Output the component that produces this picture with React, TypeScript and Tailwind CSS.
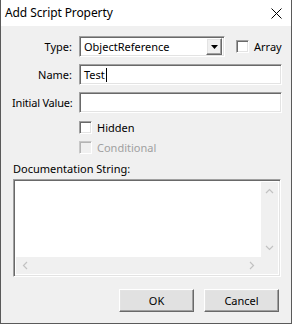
import React from "react";

const sunken =
  "border border-t-[#a0a0a0] border-l-[#a0a0a0] border-r-white border-b-white shadow-[inset_1px_1px_0_#696969,inset_-1px_-1px_0_#e3e3e3]";
const raised =
  "border border-t-white border-l-white border-r-[#696969] border-b-[#696969] shadow-[inset_-1px_-1px_0_#a0a0a0,inset_1px_1px_0_#e3e3e3]";

function CheckBox({ disabled }: { disabled?: boolean }) {
  return (
    <div
      className={`w-[13px] h-[13px] shrink-0 ${
        disabled
          ? "border border-t-[#c8c8c8] border-l-[#c8c8c8] border-r-white border-b-white shadow-[inset_1px_1px_0_#b4b4b4] bg-[#f0f0f0]"
          : `${sunken} bg-white`
      }`}
    />
  );
}

function Chevron({ dir }: { dir: "up" | "down" | "left" | "right" }) {
  const pts = {
    up: "1,5 4.5,1.5 8,5",
    down: "1,2 4.5,5.5 8,2",
    left: "5,1 1.5,4.5 5,8",
    right: "2,1 5.5,4.5 2,8",
  }[dir];
  const w = dir === "up" || dir === "down" ? 9 : 7;
  const h = dir === "up" || dir === "down" ? 7 : 9;
  return (
    <svg width={w} height={h} viewBox={`0 0 ${w} ${h}`}>
      <polyline points={pts} fill="none" stroke="#c2c2c2" strokeWidth="1.2" />
    </svg>
  );
}

export default function App() {
  return (
    <div
      className="w-[292px] h-[324px] flex flex-col bg-[#f0f0f0] border-x border-b border-[#5a5a5a] text-black text-[11px] leading-none"
      style={{ fontFamily: '"Noto Sans", "Open Sans", sans-serif' }}
    >
      {/* Title bar */}
      <div className="h-[26px] bg-white flex items-center justify-between pl-[4px] pr-[9px] shrink-0">
        <span className="text-[12px] tracking-[-0.1px]">Add Script Property</span>
        <svg width="11" height="11" viewBox="0 0 11 11">
          <path d="M0.5 0.5 L10.5 10.5 M10.5 0.5 L0.5 10.5" stroke="#000" strokeWidth="1" />
        </svg>
      </div>

      {/* Body */}
      <div className="flex flex-col pl-[11px] pr-[11px] pt-[10px] flex-1">
        <div className="grid grid-cols-[60px_1fr] gap-x-[7px] gap-y-[7px] items-center">
          <span className="text-right whitespace-nowrap">Type:</span>
          <div className="flex items-center">
            <div className={`w-[146px] h-[21px] bg-white flex items-center justify-between ${sunken} pl-[4px] pr-[2px]`}>
              <span>ObjectReference</span>
              <div className={`w-[16px] h-[17px] bg-[#f0f0f0] ${raised} flex items-center justify-center`}>
                <svg width="7" height="4" viewBox="0 0 7 4">
                  <path d="M0 0 H7 L3.5 4 Z" fill="#000" />
                </svg>
              </div>
            </div>
            <div className="flex items-center ml-[11px] gap-[5px]">
              <CheckBox />
              <span>Array</span>
            </div>
          </div>

          <span className="text-right whitespace-nowrap">Name:</span>
          <div className={`h-[21px] bg-white flex items-center pl-[4px] ${sunken}`}>
            <span>Test</span>
            <span className="w-px h-[14px] bg-black ml-[1px]" />
          </div>

          <span className="text-right whitespace-nowrap tracking-[-0.2px]">Initial Value:</span>
          <div className={`h-[21px] bg-white ${sunken}`} />

          <span />
          <div className="flex items-center gap-[5px] pt-[1px]">
            <CheckBox />
            <span>Hidden</span>
          </div>

          <span />
          <div className="flex items-center gap-[5px]">
            <CheckBox disabled />
            <span className="text-[#a0a0a0]">Conditional</span>
          </div>
        </div>

        <div className="mt-[9px] pl-[1px]">Documentation String:</div>

        <div className={`mt-[5px] h-[98px] w-[268px] ml-[1px] bg-white flex flex-col ${sunken} p-[2px]`}>
          <div className="flex flex-1">
            <div className="flex-1 bg-white" />
            <div className="w-[17px] bg-[#f0f0f0] flex flex-col items-center justify-between py-[6px]">
              <Chevron dir="up" />
              <Chevron dir="down" />
            </div>
          </div>
          <div className="h-[17px] flex">
            <div className="flex-1 bg-[#f0f0f0] flex items-center justify-between px-[6px]">
              <Chevron dir="left" />
              <Chevron dir="right" />
            </div>
            <div className="w-[17px] bg-[#f0f0f0]" />
          </div>
        </div>

        <div className="flex justify-end gap-[10px] mt-[12px] pr-[1px]">
          <button className={`w-[75px] h-[23px] bg-[#e1e1e1] ${raised}`}>OK</button>
          <button className={`w-[75px] h-[23px] bg-[#e1e1e1] ${raised}`}>Cancel</button>
        </div>
      </div>
    </div>
  );
}
